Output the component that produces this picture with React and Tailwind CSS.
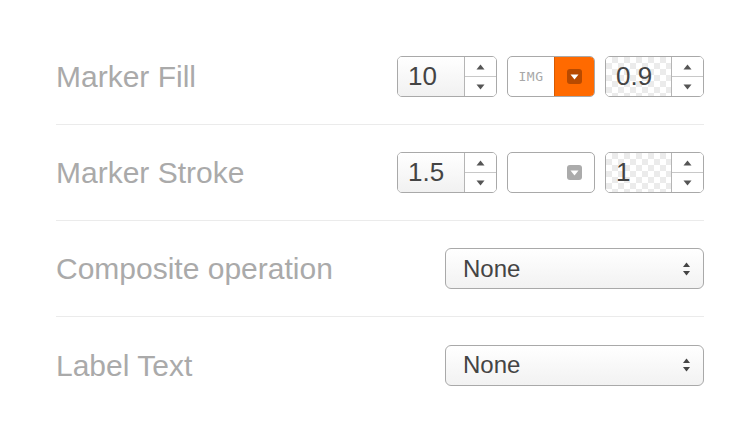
const font = { fontFamily: '"Liberation Sans", Arial, sans-serif' };

const UpArrow = () => (
  <svg width="9" height="6" viewBox="0 0 9 6">
    <path d="M4.5 0.5 L8.5 5.5 L0.5 5.5 Z" fill="#555" />
  </svg>
);

const DownArrow = () => (
  <svg width="9" height="6" viewBox="0 0 9 6">
    <path d="M0.5 0.5 L8.5 0.5 L4.5 5.5 Z" fill="#555" />
  </svg>
);

const NumberBox = ({ value, width, checker }) => (
  <div
    className={`flex h-[41px] rounded-[5px] border border-[#a9a9a9] overflow-hidden ${width}`}
  >
    <div
      className={`flex-1 flex items-center pl-[10px] text-[26px] text-[#444] border-r border-[#b5b5b5] ${
        checker
          ? "bg-[image:conic-gradient(#ebebeb_25%,#ffffff_0_50%,#ebebeb_0_75%,#ffffff_0)] bg-[length:12px_12px]"
          : "bg-gradient-to-b from-white to-[#f1f1f1]"
      }`}
    >
      {value}
    </div>
    <div className="w-[31px] flex flex-col bg-white">
      <div className="flex-1 flex items-center justify-center border-b border-[#c8c8c8]">
        <UpArrow />
      </div>
      <div className="flex-1 flex items-center justify-center">
        <DownArrow />
      </div>
    </div>
  </div>
);

const CaretSquare = ({ bg }) => (
  <div
    className={`w-[15px] h-[15px] rounded-[3px] flex items-center justify-center ${bg}`}
  >
    <svg width="9" height="6" viewBox="0 0 9 6">
      <path d="M0.5 0.5 L8.5 0.5 L4.5 5.5 Z" fill="#fff" />
    </svg>
  </div>
);

const ColorBox = ({ img }) => (
  <div className="flex h-[41px] w-[88px] rounded-[5px] border border-[#a9a9a9] overflow-hidden bg-white">
    <div className="w-[46px] flex items-center justify-center">
      {img && (
        <span
          className="text-[13px] tracking-[0.5px] text-[#a8a8a8]"
          style={{ fontFamily: '"DejaVu Sans Mono", monospace' }}
        >
          IMG
        </span>
      )}
    </div>
    {img ? (
      <div className="flex-1 flex items-center justify-center bg-[#ff6a00] border-l border-[#d85a00]">
        <CaretSquare bg="bg-[#b84a00]" />
      </div>
    ) : (
      <div className="flex-1 flex items-center justify-center">
        <CaretSquare bg="bg-[#ababab]" />
      </div>
    )}
  </div>
);

const SelectBox = () => (
  <div className="flex items-center justify-between h-[41px] w-[259px] rounded-[6px] border border-[#a9a9a9] bg-gradient-to-b from-white to-[#f2f2f2] pl-[17px] pr-[12px]">
    <span className="text-[24px] text-[#444]">None</span>
    <svg width="9" height="14" viewBox="0 0 9 14">
      <path d="M4.5 0.5 L8 5 L1 5 Z" fill="#444" />
      <path d="M1 9 L8 9 L4.5 13.5 Z" fill="#444" />
    </svg>
  </div>
);

const Row = ({ label, children, last }) => (
  <div
    className={`h-[96px] flex items-center justify-between ${
      last ? "" : "border-b border-[#ebebeb]"
    }`}
  >
    <span className="text-[30px] text-[#aaaaaa]">{label}</span>
    <div className="flex items-center gap-[10px]">{children}</div>
  </div>
);

export default function App() {
  return (
    <div className="w-[744px] h-[438px] bg-white" style={font}>
      <div className="pt-[29px] pl-[56px] pr-[40px] flex flex-col">
        <Row label="Marker Fill">
          <NumberBox value="10" width="w-[100px]" />
          <ColorBox img />
          <NumberBox value="0.9" width="w-[99px]" checker />
        </Row>
        <Row label="Marker Stroke">
          <NumberBox value="1.5" width="w-[100px]" />
          <ColorBox />
          <NumberBox value="1" width="w-[99px]" checker />
        </Row>
        <Row label="Composite operation">
          <SelectBox />
        </Row>
        <Row label="Label Text" last>
          <SelectBox />
        </Row>
      </div>
    </div>
  );
}
